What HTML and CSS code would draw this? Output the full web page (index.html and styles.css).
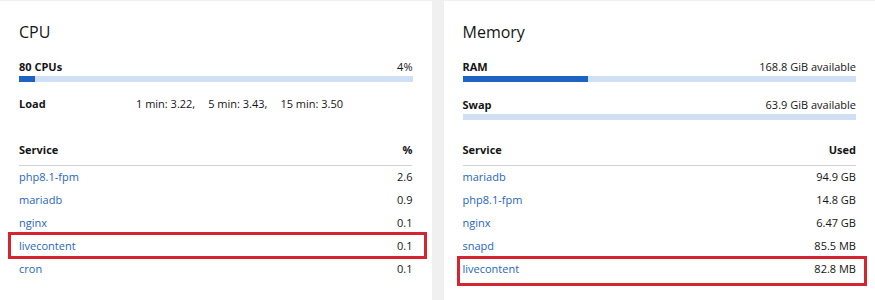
FILE: index.html
```html
<!DOCTYPE html>
<html lang="en">
<head>
<meta charset="utf-8">
<title>Usage</title>
<link rel="stylesheet" href="styles.css">
</head>
<body>
<main class="layout">
  <section class="card">
    <h2 class="card-title">CPU</h2>
    <div class="stats">
      <div class="meter">
        <div class="meter-head"><span class="meter-label">80 CPUs</span><span>4%</span></div>
        <div class="bar"><div class="bar-fill" style="width:4%"></div></div>
      </div>
      <div class="load">
        <span class="meter-label">Load</span>
        <span class="load-values"><span>1 min: 3.22,</span><span>5 min: 3.43,</span><span>15 min: 3.50</span></span>
      </div>
    </div>
    <table class="services">
      <thead><tr><th>Service</th><th class="num">%</th></tr></thead>
      <tbody>
        <tr><td><a href="#">php8.1-fpm</a></td><td class="num">2.6</td></tr>
        <tr><td><a href="#">mariadb</a></td><td class="num">0.9</td></tr>
        <tr><td><a href="#">nginx</a></td><td class="num">0.1</td></tr>
        <tr class="mark mark-cpu"><td><a href="#">livecontent</a></td><td class="num">0.1</td></tr>
        <tr><td><a href="#">cron</a></td><td class="num">0.1</td></tr>
      </tbody>
    </table>
  </section>
  <section class="card">
    <h2 class="card-title">Memory</h2>
    <div class="stats">
      <div class="meter">
        <div class="meter-head"><span class="meter-label">RAM</span><span>168.8 GiB available</span></div>
        <div class="bar"><div class="bar-fill" style="width:32%"></div></div>
      </div>
      <div class="meter meter-swap">
        <div class="meter-head"><span class="meter-label">Swap</span><span>63.9 GiB available</span></div>
        <div class="bar"><div class="bar-fill" style="width:0%"></div></div>
      </div>
    </div>
    <table class="services">
      <thead><tr><th>Service</th><th class="num">Used</th></tr></thead>
      <tbody>
        <tr><td><a href="#">mariadb</a></td><td class="num">94.9 GB</td></tr>
        <tr><td><a href="#">php8.1-fpm</a></td><td class="num">14.8 GB</td></tr>
        <tr><td><a href="#">nginx</a></td><td class="num">6.47 GB</td></tr>
        <tr><td><a href="#">snapd</a></td><td class="num">85.5 MB</td></tr>
        <tr class="mark mark-mem"><td><a href="#">livecontent</a></td><td class="num">82.8 MB</td></tr>
      </tbody>
    </table>
  </section>
</main>
</body>
</html>
```
FILE: styles.css
```css
html, body {
  margin: 0;
  padding: 0;
  background: #f0f0f0;
  font-family: "Open Sans", "Liberation Sans", sans-serif;
  font-size: 11px;
  line-height: 14px;
  color: #151515;
}

.layout {
  display: grid;
  grid-template-columns: 1fr 1fr;
  column-gap: 12px;
  padding-top: 1px;
  height: 299px;
}

.card {
  background: #fff;
  padding: 21px 19px 0;
}

.card-title {
  margin: 0;
  font-size: 16px;
  line-height: 20px;
  font-weight: 400;
}

.stats {
  margin-top: 18px;
  height: 83px;
  display: flex;
  flex-direction: column;
}

.meter-head {
  display: flex;
  justify-content: space-between;
}

.meter-label {
  font-weight: 700;
}

.bar {
  margin-top: 2px;
  height: 6px;
  background: #cfdff4;
}

.bar-fill {
  height: 100%;
  background: #1f63c2;
}

.meter-swap {
  margin-top: 16px;
}

.load {
  margin-top: 15px;
  display: grid;
  grid-template-columns: 117px 1fr;
}

.load-values {
  display: flex;
  gap: 13px;
}

.services {
  width: 100%;
  border-collapse: collapse;
}

.services th {
  text-align: left;
  font-weight: 700;
  padding: 0 0 8px;
  border-bottom: 1px solid #d2d2d2;
}

.services td {
  padding: 4px 0 5px;
}

.services .num {
  text-align: right;
}

.services a {
  color: #1f66c0;
  text-decoration: none;
}

.mark {
  position: relative;
}

.mark::after {
  content: "";
  position: absolute;
  border: 3px solid #d42530;
  pointer-events: none;
}

.mark-cpu::after {
  left: -11px;
  right: -14px;
  top: -3px;
  bottom: -1px;
}

.mark-mem::after {
  left: -6px;
  right: -11px;
  top: -2px;
  bottom: -5px;
}
```
